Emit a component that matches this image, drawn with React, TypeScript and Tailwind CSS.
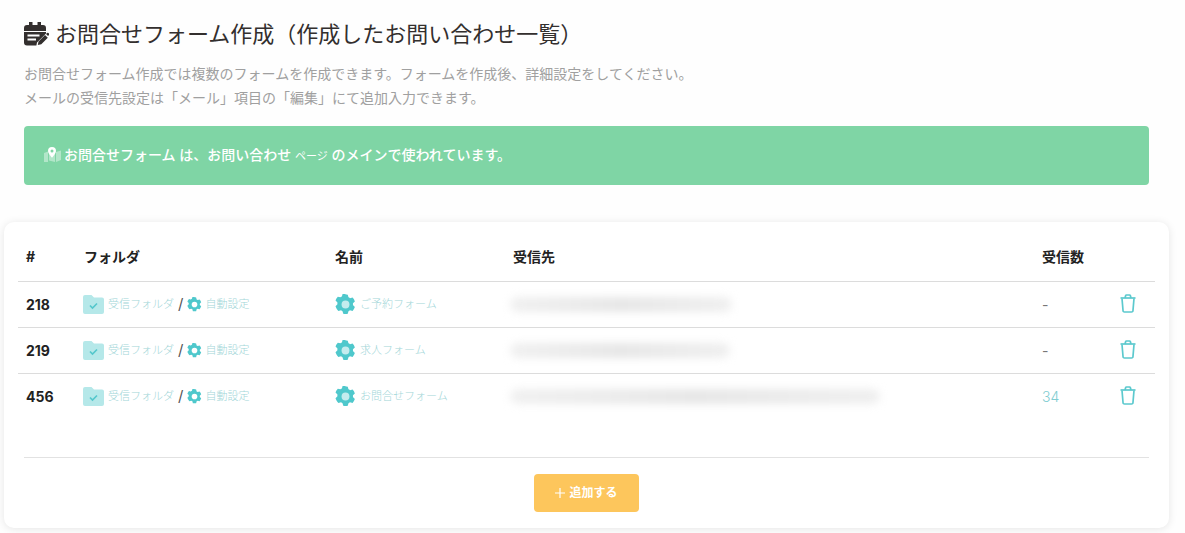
const jp = "font-['Inter','Noto_Sans_CJK_JP',sans-serif]";

function CalendarEdit() {
  return (
    <svg width="25" height="24" viewBox="0 0 25 24" className="shrink-0">
      <path fill="#332f2e" d="M5 0h3.500v3h5V0H17v3h2a3 3 0 0 1 3 3v3H0V6a3 3 0 0 1 3-3h2V0z" />
      <path fill="#332f2e" d="M0 10h22v1.500l-9 9-.6 3H3a3 3 0 0 1-3-3V10z" />
      <path fill="#fff" d="M3.500 12.500h12v2h-12zM3.500 16.500h8.500v2H3.500z" />
      <path fill="#332f2e" d="M14.500 19.500l6.500-6.500 2.800 2.800-6.500 6.500-3.500.7.700-3.500z" />
      <path fill="#332f2e" d="M22 12l1-1a1 1 0 0 1 1.400 0l.6.600v1.400l-1 1z" />
    </svg>
  );
}

function MapPin() {
  return (
    <svg width="17" height="15" viewBox="0 0 17 15" className="shrink-0">
      <path fill="#fff" fillOpacity="0.4" d="M0 6l4-1.500V15L0 15zM5 5l3 6 3-6v10l-6-1.500zM12 5l5-1.500V13l-5 2z" />
      <path fill="#fff" d="M8 0a4 4 0 0 1 4 4c0 2.200-2.500 5-4 7-1.500-2-4-4.800-4-7a4 4 0 0 1 4-4z" />
      <circle cx="8" cy="4" r="1.500" fill="#7fd5a5" />
    </svg>
  );
}

function FolderCheck() {
  return (
    <svg width="21" height="19" viewBox="0 0 21 19" className="shrink-0">
      <path fill="#b5e8e9" d="M2 0h6.500l2.500 2.500h8a2 2 0 0 1 2 2V17a2 2 0 0 1-2 2H2a2 2 0 0 1-2-2V2a2 2 0 0 1 2-2z" />
      <path fill="none" stroke="#55c7cc" strokeWidth="1.700" d="M7 10.500l2.500 2.500 4.500-4.500" />
    </svg>
  );
}

function Gear({ size, inner }: { size: number; inner: string }) {
  const d =
    "M12 0.500c.9 0 1.800.1 2.600.3l.8 3c.6.200 1.200.6 1.700 1l3-.8c1.200 1.300 2.100 2.800 2.600 4.500l-2.200 2.200a8 8 0 0 1 0 2l2.200 2.200c-.5 1.700-1.400 3.200-2.600 4.500l-3-.8c-.5.400-1.100.8-1.700 1l-.8 3c-1.700.4-3.500.4-5.200 0l-.8-3c-.6-.2-1.200-.6-1.700-1l-3 .8C2 17.100 1.100 15.600.6 13.900l2.200-2.200a8 8 0 0 1 0-2L.6 7.500C1.100 5.800 2 4.300 3.200 3l3 .8c.5-.4 1.100-.8 1.700-1l.8-3c.9-.2 2.400-.3 3.300-.3z";
  return (
    <svg width={size} height={size} viewBox="0 0 24 24" className="shrink-0">
      <path fill="#4fc8cc" d={d} />
      <circle cx="12" cy="12" r="4.500" fill={inner} />
    </svg>
  );
}

function Trash() {
  return (
    <svg width="16" height="19" viewBox="0 0 16 19" fill="none" stroke="#5cc9ce" strokeWidth="1.700" className="shrink-0">
      <path d="M0.500 4h15" />
      <path d="M5 4l.6-2.200A1 1 0 0 1 6.600 1h2.800a1 1 0 0 1 1 .8L11 4" />
      <path d="M2 4.500l1 11.800A1.500 1.500 0 0 0 4.500 18h7a1.500 1.500 0 0 0 1.500-1.700l1-11.800" />
    </svg>
  );
}

const rows = [
  { id: "218", name: "ご予約フォーム", count: "-", blur: "w-[222px]" },
  { id: "219", name: "求人フォーム", count: "-", blur: "w-[220px]" },
  { id: "456", name: "お問合せフォーム", count: "34", blur: "w-[370px]" },
];

export default function App() {
  return (
    <div className={`${jp} w-[1185px] h-[533px] overflow-hidden bg-[#fefefe] flex flex-col`}>
      <div className="pl-6 pr-9 pt-[19px]">
        <div className="flex items-center gap-[6px] h-[30px]">
          <CalendarEdit />
          <h1 className="text-[22px] leading-[30px] text-[#332f2e] font-normal whitespace-nowrap">
            お問合せフォーム作成（作成したお問い合わせ一覧）
          </h1>
        </div>
        <p className="mt-[13px] text-[14px] leading-6 text-[#a0a0a0] whitespace-nowrap">
          お問合せフォーム作成では複数のフォームを作成できます。フォームを作成後、詳細設定をしてください。
          <br />
          メールの受信先設定は「メール」項目の「編集」にて追加入力できます。
        </p>
        <div className="mt-[16px] h-[59px] pb-[2px] rounded-[4px] bg-[#7fd5a5] flex items-center pl-5 text-white text-[14px] font-medium">
          <MapPin />
          <span className="ml-[3px] whitespace-nowrap">お問合せフォーム は、お問い合わせ <span className="text-[11px] font-normal">ページ</span> のメインで使われています。</span>
        </div>
      </div>

      <div className="mt-[37px] ml-1 w-[1165px] h-[306px] shrink-0 rounded-[10px] bg-white shadow-[0_1px_8px_rgba(0,0,0,0.10)] px-[14px] flex flex-col">
        <div className="grid grid-cols-[66px_251px_178px_529px_78px_35px] text-[14px] font-bold text-[#222] h-[60px] items-end pb-[14px] border-b border-[#dcdcdc]">
          <div className="pl-2">#</div>
          <div>フォルダ</div>
          <div>名前</div>
          <div>受信先</div>
          <div>受信数</div>
          <div />
        </div>
        {rows.map((r, i) => (
          <div
            key={r.id}
            className={`grid grid-cols-[66px_251px_178px_529px_78px_35px] h-[46px] items-center border-b ${i < 2 ? "border-[#dcdcdc]" : "border-transparent"}`}
          >
            <div className="pl-2 text-[14px] font-bold text-[#222]">{r.id}</div>
            <div className="flex items-center -ml-px">
              <FolderCheck />
              <span className="ml-1 text-[11px] font-light text-[#9fd6d8]">受信フォルダ</span>
              <span className="ml-1 mr-1 text-[15px] text-[#555]">/</span>
              <Gear size={15} inner="#fff" />
              <span className="ml-[3px] text-[11px] font-light text-[#9fd6d8]">自動設定</span>
            </div>
            <div className="flex items-center">
              <Gear size={21} inner="#c4ecee" />
              <span className="ml-[4px] text-[11px] font-light text-[#9fd6d8]">{r.name}</span>
            </div>
            <div className="flex items-center -ml-[3px]">
              <div className={`${r.blur} h-[15px] rounded-full blur-[4px] bg-linear-to-r from-[#f0f0f0] via-[#e6e6e6] to-[#efefef]`} />
            </div>
            <div className={r.count === "34" ? "text-[14px] font-light text-[#7fcdd1]" : "text-[14px] text-[#777]"}>{r.count}</div>
            <div className="-mt-[2px]">
              <Trash />
            </div>
          </div>
        ))}
        <div className="mt-[37px] mx-[6px] pt-4 border-t border-[#e2e2e2] flex justify-center">
          <button className="w-[105px] h-[38px] rounded-[4px] bg-[#fdc65c] text-white text-[12px] font-bold flex items-center justify-center gap-[4px]">
            <svg width="10" height="10" viewBox="0 0 10 10" stroke="#fff" strokeWidth="1.200" className="shrink-0">
              <path d="M5 0v10M0 5h10" />
            </svg>
            <span>追加する</span>
          </button>
        </div>
      </div>
    </div>
  );
}
